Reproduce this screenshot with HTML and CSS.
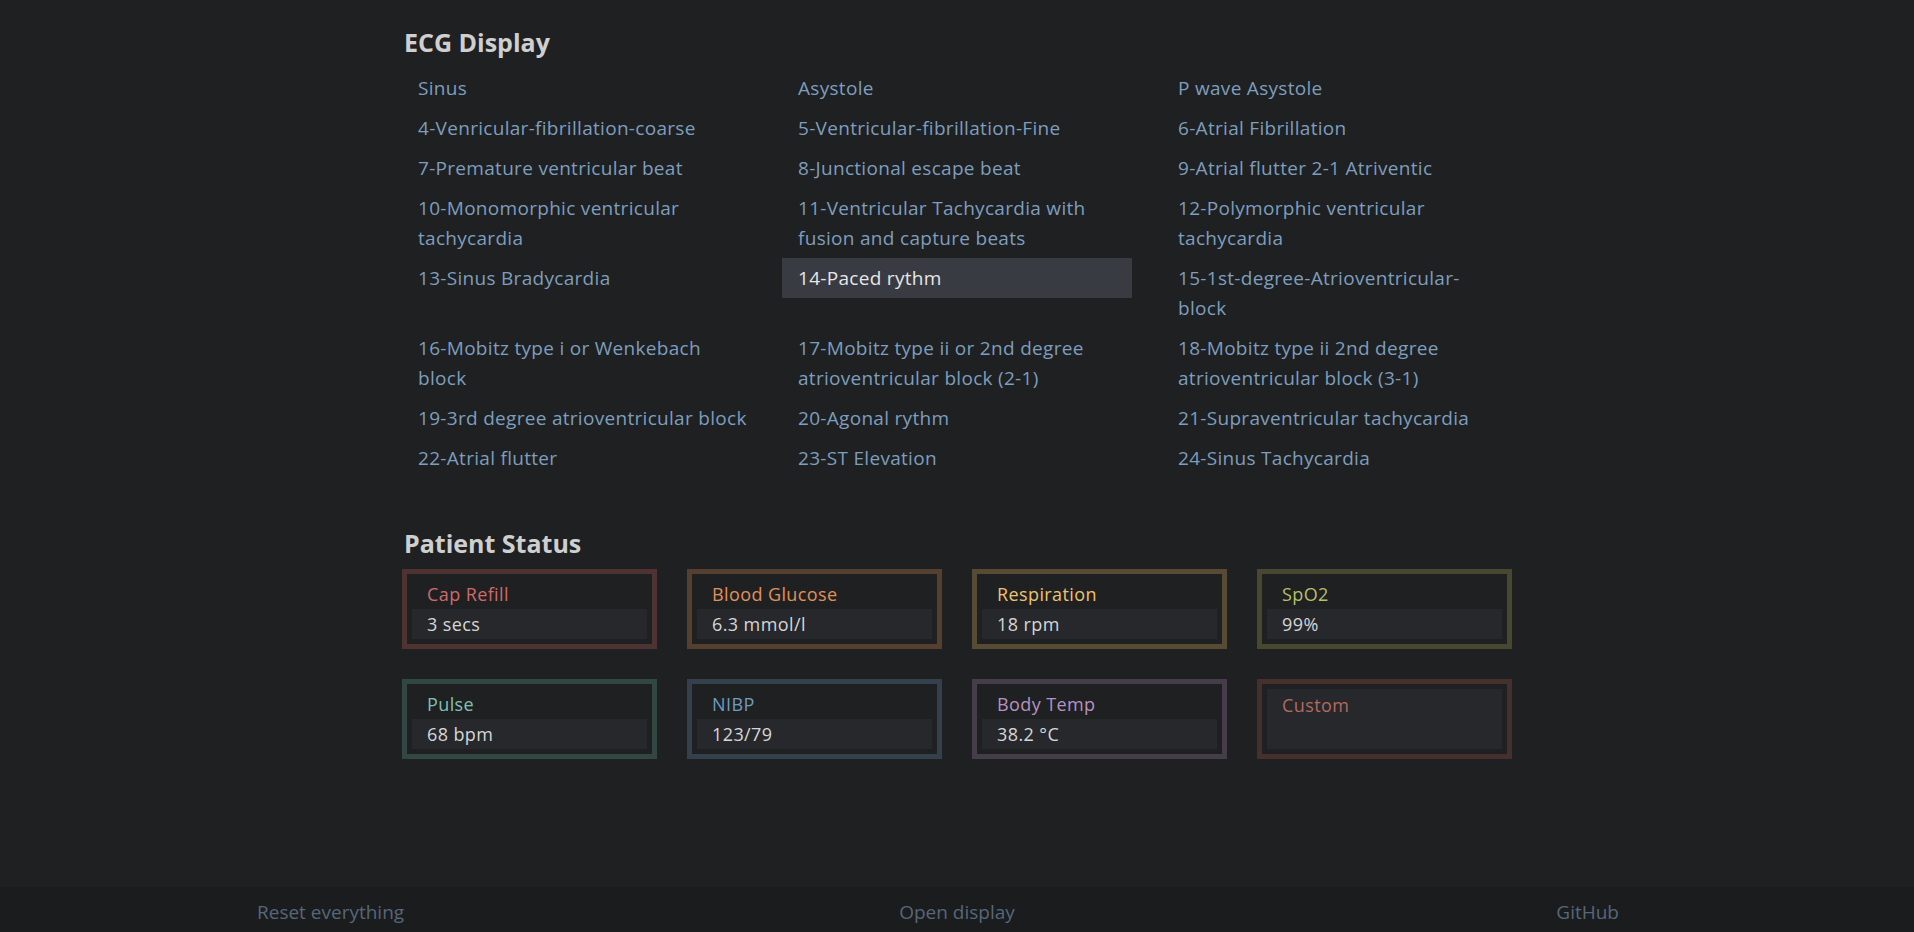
FILE: index.html
```html
<!DOCTYPE html>
<html lang="en">
<head>
<meta charset="utf-8">
<title>ECG Control</title>
<link rel="stylesheet" href="styles.css">
</head>
<body>
<main class="container">
  <section class="section">
    <h2 class="section-title">ECG Display</h2>
    <div class="rhythm-grid">
      <a class="rhythm">Sinus</a>
      <a class="rhythm">Asystole</a>
      <a class="rhythm">P wave Asystole</a>
      <a class="rhythm">4-Venricular-fibrillation-coarse</a>
      <a class="rhythm">5-Ventricular-fibrillation-Fine</a>
      <a class="rhythm">6-Atrial Fibrillation</a>
      <a class="rhythm">7-Premature ventricular beat</a>
      <a class="rhythm">8-Junctional escape beat</a>
      <a class="rhythm">9-Atrial flutter 2-1 Atriventic</a>
      <a class="rhythm">10-Monomorphic ventricular<br>tachycardia</a>
      <a class="rhythm">11-Ventricular Tachycardia with<br>fusion and capture beats</a>
      <a class="rhythm">12-Polymorphic ventricular<br>tachycardia</a>
      <a class="rhythm">13-Sinus Bradycardia</a>
      <a class="rhythm active">14-Paced rythm</a>
      <a class="rhythm">15-1st-degree-Atrioventricular-<br>block</a>
      <a class="rhythm">16-Mobitz type i or Wenkebach<br>block</a>
      <a class="rhythm">17-Mobitz type ii or 2nd degree<br>atrioventricular block (2-1)</a>
      <a class="rhythm">18-Mobitz type ii 2nd degree<br>atrioventricular block (3-1)</a>
      <a class="rhythm">19-3rd degree atrioventricular block</a>
      <a class="rhythm">20-Agonal rythm</a>
      <a class="rhythm">21-Supraventricular tachycardia</a>
      <a class="rhythm">22-Atrial flutter</a>
      <a class="rhythm">23-ST Elevation</a>
      <a class="rhythm">24-Sinus Tachycardia</a>
    </div>
  </section>

  <section class="section status">
    <h2 class="section-title">Patient Status</h2>
    <div class="status-grid">
      <div class="card red"><div class="card-label">Cap Refill</div><div class="card-value">3 secs</div></div>
      <div class="card orange"><div class="card-label">Blood Glucose</div><div class="card-value">6.3 mmol/l</div></div>
      <div class="card yellow"><div class="card-label">Respiration</div><div class="card-value">18 rpm</div></div>
      <div class="card green"><div class="card-label">SpO2</div><div class="card-value">99%</div></div>
      <div class="card teal"><div class="card-label">Pulse</div><div class="card-value">68 bpm</div></div>
      <div class="card blue"><div class="card-label">NIBP</div><div class="card-value">123/79</div></div>
      <div class="card purple"><div class="card-label">Body Temp</div><div class="card-value">38.2 °C</div></div>
      <div class="card custom"><div class="card-custom">Custom</div></div>
    </div>
  </section>
</main>
<footer class="footer">
  <a class="footer-link left">Reset everything</a>
  <a class="footer-link center">Open display</a>
  <a class="footer-link right">GitHub</a>
</footer>
</body>
</html>
```

FILE: styles.css
```css
* { box-sizing: border-box; }

html, body {
  margin: 0;
  padding: 0;
}

body {
  background: #1f2022;
  color: #d4d4d4;
  font-family: "Open Sans", "Noto Sans", sans-serif;
  display: flex;
  flex-direction: column;
  min-height: 937px;
}

.container {
  width: 1110px;
  margin: 0 auto;
  flex: 1;
  padding-top: 24px;
}

.section-title {
  margin: 0;
  font-size: 25px;
  font-weight: 700;
  color: #cfcfcf;
  line-height: 36px;
  padding-left: 2px;
}

.rhythm-grid {
  display: grid;
  grid-template-columns: repeat(3, minmax(0, 1fr));
  column-gap: 30px;
  align-items: start;
  margin-top: 8px;
}

.rhythm {
  display: block;
  padding: 5px 16px;
  font-size: 19px;
  letter-spacing: 0.3px;
  line-height: 30px;
  white-space: nowrap;
  color: #7d9ebd;
  cursor: pointer;
}

.rhythm.active {
  background: #393b42;
  color: #e6e6e6;
}

.status {
  margin-top: 47px;
}

.status-grid {
  display: grid;
  grid-template-columns: repeat(4, minmax(0, 1fr));
  gap: 30px;
  margin-top: 8px;
}

.card {
  height: 80px;
  border: 5px solid;
  padding: 0 5px 5px;
  display: flex;
  flex-direction: column;
}

.card-label {
  height: 35px;
  padding: 9px 15px 0;
  font-size: 18px;
  letter-spacing: 0.4px;
  line-height: 22px;
}

.card-value {
  height: 30px;
  background: #27282c;
  padding: 0 15px;
  font-size: 18px;
  letter-spacing: 0.4px;
  line-height: 30px;
  color: #d6d6d6;
}

.card-custom {
  margin-top: 5px;
  height: 60px;
  background: #27282c;
  padding: 0 15px;
  font-size: 18px;
  letter-spacing: 0.4px;
  line-height: 32px;
}

.red { border-color: #4f3333; }
.red .card-label { color: #d06a6a; }
.orange { border-color: #55402f; }
.orange .card-label { color: #e0915a; }
.yellow { border-color: #574c33; }
.yellow .card-label { color: #edc371; }
.green { border-color: #47482f; }
.green .card-label { color: #b5bf6a; }
.teal { border-color: #334742; }
.teal .card-label { color: #80c0b2; }
.blue { border-color: #34414c; }
.blue .card-label { color: #6f9cc0; }
.purple { border-color: #453d4a; }
.purple .card-label { color: #b593c1; }
.custom { border-color: #45302e; }
.custom .card-custom { color: #b3695f; }

.footer {
  height: 50px;
  background: #1b1c1e;
  display: grid;
  grid-template-columns: repeat(3, 1fr);
  width: 100%;
  padding: 0 257px;
  align-items: center;
}

.footer-link {
  font-family: "Open Sans", "DejaVu Sans Condensed", sans-serif;
  font-stretch: 93%;
  font-size: 19px;
  color: #56677a;
  cursor: pointer;
}

.footer-link.center { text-align: center; }
.footer-link.right { text-align: right; padding-right: 38px; }
```
